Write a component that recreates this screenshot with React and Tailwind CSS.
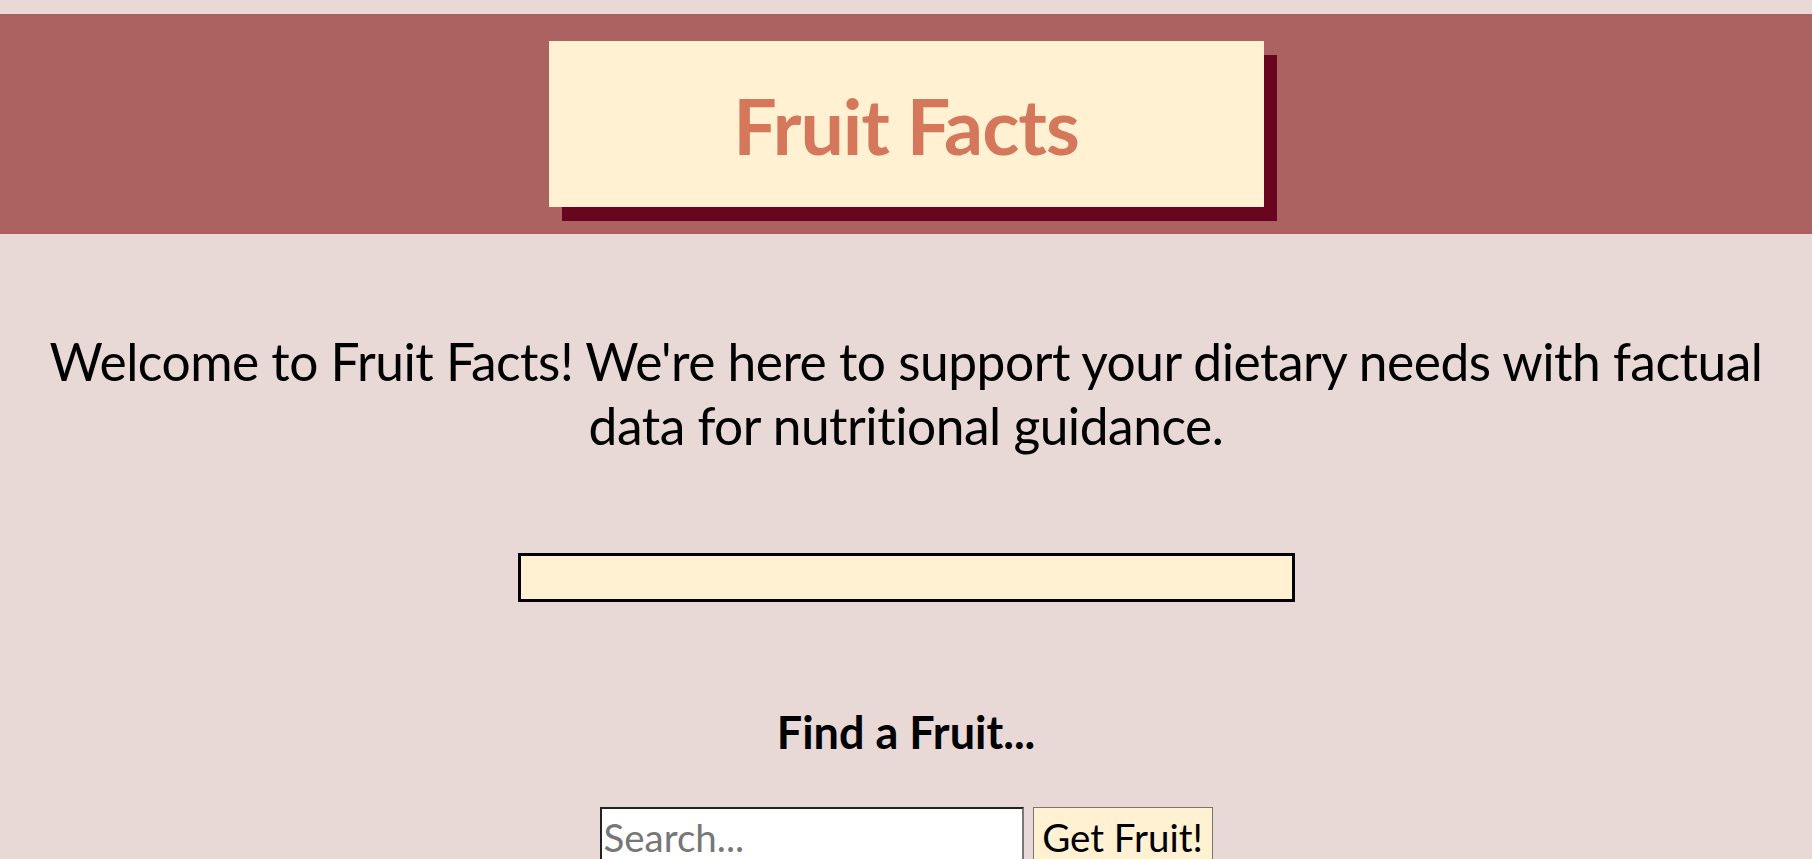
export default function App() {
  return (
    <div
      className="min-h-screen bg-[#e8d8d6] pt-[14px] text-black"
      style={{ fontFamily: 'Lato, "Open Sans", sans-serif' }}
    >
      {/* Header */}
      <header className="h-[220px] bg-[#ac6260] flex justify-center pt-[27px]">
        <div className="w-[715px] h-[166px] bg-[#fff1d1] shadow-[13px_14px_0_#680620] flex items-center justify-center">
          <h1 className="text-[77px] font-bold text-[#d4775a] leading-none tracking-[-1px] pt-[3px]">Fruit Facts</h1>
        </div>
      </header>

      <main className="flex flex-col items-center">
        <p className="mt-[95px] text-[51.5px] leading-[64px] text-center tracking-[-0.5px]">
          Welcome to Fruit Facts! We're here to support your dietary needs with factual
          <br />
          data for nutritional guidance.
        </p>

        <div className="mt-[96px] w-[777px] h-[49px] bg-[#fff1d1] border-[3px] border-black" />

        <h2 className="mt-[108px] text-[45px] font-bold leading-none">Find a Fruit...</h2>

        <div className="mt-[52px] flex items-start gap-[9px]">
          <input
            type="text"
            placeholder="Search..."
            className="w-[424px] h-[60px] bg-white border-2 border-t-[#222] border-l-[#222] border-r-[#777] border-b-[#777] px-[2px] text-[38.5px] placeholder:text-[#777] outline-none"
          />
          <button className="w-[180px] h-[60px] bg-[#fff1d1] border border-[#767676] text-[38.5px] leading-none">
            Get Fruit!
          </button>
        </div>
      </main>
    </div>
  )
}
